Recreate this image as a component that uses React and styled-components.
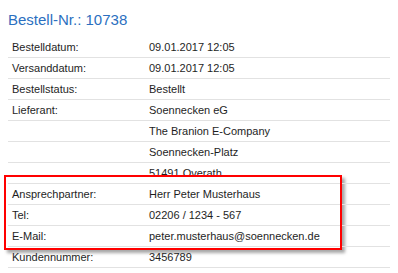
import styled, { createGlobalStyle } from "styled-components";

const GlobalStyle = createGlobalStyle`
  body {
    margin: 0;
    background: #fff;
    font-family: "Liberation Sans", Arial, sans-serif;
  }
`;

const OrderWrapper = styled.section`
  padding: 11px 8px 0 8px;
`;

const OrderTitle = styled.h2`
  margin: 0 0 8px 0;
  font-size: 15px;
  line-height: 18px;
  font-weight: normal;
  color: #2b6fc0;
`;

const DetailList = styled.div`
  display: flex;
  flex-direction: column;
`;

const DetailRow = styled.div`
  position: relative;
  z-index: 1;
  display: grid;
  grid-template-columns: 137px 1fr;
  height: 20px;
  padding: 0 4px;
  border-bottom: 1px solid #e2e2e2;
  font-size: 11px;
  line-height: 20px;
  color: #1e1e1e;
  white-space: nowrap;
`;

const Highlight = styled.div`
  position: relative;

  &::before,
  &::after {
    content: "";
    position: absolute;
    top: -9px;
    left: -4px;
    right: 48px;
    bottom: -3px;
  }

  &::before {
    z-index: 0;
    background: #fff;
    box-shadow: 3px 3px 3px rgba(0, 0, 0, 0.35);
  }

  &::after {
    z-index: 2;
    border: 2px solid #f00;
    pointer-events: none;
  }
`;

const rows = [
  ["Bestelldatum:", "09.01.2017 12:05"],
  ["Versanddatum:", "09.01.2017 12:05"],
  ["Bestellstatus:", "Bestellt"],
  ["Lieferant:", "Soennecken eG"],
  ["", "The Branion E-Company"],
  ["", "Soennecken-Platz"],
  ["", "51491 Overath"],
];

const contact = [
  ["Ansprechpartner:", "Herr Peter Musterhaus"],
  ["Tel:", "02206 / 1234 - 567"],
  ["E-Mail:", "peter.musterhaus@soennecken.de"],
];

const Row = ({ label, value }) => (
  <DetailRow>
    <span>{label}</span>
    <span>{value}</span>
  </DetailRow>
);

const App = () => {
  return (
    <OrderWrapper>
      <GlobalStyle />
      <OrderTitle>Bestell-Nr.: 10738</OrderTitle>
      <DetailList>
        {rows.map(([label, value], i) => (
          <Row key={i} label={label} value={value} />
        ))}
        <Highlight>
          {contact.map(([label, value]) => (
            <Row key={label} label={label} value={value} />
          ))}
        </Highlight>
        <Row label="Kundennummer:" value="3456789" />
      </DetailList>
    </OrderWrapper>
  );
};

export default App;
